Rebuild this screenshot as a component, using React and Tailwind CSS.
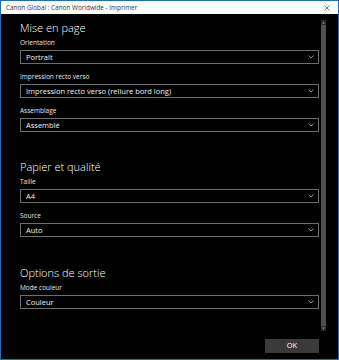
import React from "react";

function Chevron() {
  return (
    <svg width="6" height="4" viewBox="0 0 6 4" className="block">
      <path d="M0.5 0.5 L3 3 L5.5 0.5" stroke="#a0a0a0" strokeWidth="0.9" fill="none" />
    </svg>
  );
}

function Field({ label, value }) {
  return (
    <div className="flex flex-col">
      <div className="h-[10px] leading-[10px] text-[6.5px] text-[#e8e8e8] whitespace-nowrap">{label}</div>
      <div className="mt-[2px] h-[14px] border border-[#6e6e6e] flex items-center justify-between pl-[5px] pr-[4px]">
        <span className="text-[7.5px] leading-[12px] text-[#f2f2f2] whitespace-nowrap">{value}</span>
        <Chevron />
      </div>
    </div>
  );
}

function Heading({ children, className = "" }) {
  return (
    <div className={"h-[16px] leading-[16px] text-[11px] font-light text-white whitespace-nowrap " + className}>
      {children}
    </div>
  );
}

export default function App() {
  return (
    <div className="w-[339px] h-[360px] bg-black border border-[#1b6ec2] flex flex-col overflow-hidden font-['Segoe_UI','Open_Sans',sans-serif]">
      <div className="h-[13px] shrink-0 bg-white flex items-center justify-between pl-[5px] pr-[8px]">
        <span className="text-[6.4px] leading-[13px] text-[#333] whitespace-nowrap">Canon Global : Canon Worldwide - Imprimer</span>
        <svg width="6" height="6" viewBox="0 0 6 6" className="block">
          <path d="M0.5 0.5 L5.5 5.5 M5.5 0.5 L0.5 5.5" stroke="#555" strokeWidth="0.8" />
        </svg>
      </div>
      <div className="h-[318px] shrink-0 flex">
        <div className="flex-1 flex flex-col pl-[19px] pt-[6px]">
          <Heading>Mise en page</Heading>
          <div className="mt-[2px] flex flex-col gap-[8px]">
            <Field label="Orientation" value="Portrait" />
            <Field label="Impression recto verso" value="Impression recto verso (reliure bord long)" />
            <Field label="Assemblage" value="Assemblé" />
          </div>
          <Heading className="mt-[27px]">Papier et qualité</Heading>
          <div className="mt-[2px] flex flex-col gap-[8px]">
            <Field label="Taille" value="A4" />
            <Field label="Source" value="Auto" />
          </div>
          <Heading className="mt-[28px]">Options de sortie</Heading>
          <div className="mt-[2px] flex flex-col gap-[8px]">
            <Field label="Mode couleur" value="Couleur" />
          </div>
        </div>
        <div className="ml-[2px] mr-[12px] w-[5px] mt-[6px] h-[311px] flex flex-col items-center bg-[#2a2a2a]">
          <svg width="5" height="5" viewBox="0 0 5 5" className="block shrink-0">
            <path d="M1 3.5 L2.5 1.8 L4 3.5 Z" fill="#9a9a9a" />
          </svg>
          <div className="w-[5px] flex-1 bg-[#4f4f4f]" />
          <svg width="5" height="5" viewBox="0 0 5 5" className="block shrink-0">
            <path d="M1 1.5 L2.5 3.2 L4 1.5 Z" fill="#9a9a9a" />
          </svg>
        </div>
      </div>
      <div className="flex-1 flex justify-end items-start pt-[7px] pr-[19px]">
        <div className="w-[54px] h-[14px] bg-[#3a3a3a] flex items-center justify-center text-[7.5px] text-white">OK</div>
      </div>
    </div>
  );
}
